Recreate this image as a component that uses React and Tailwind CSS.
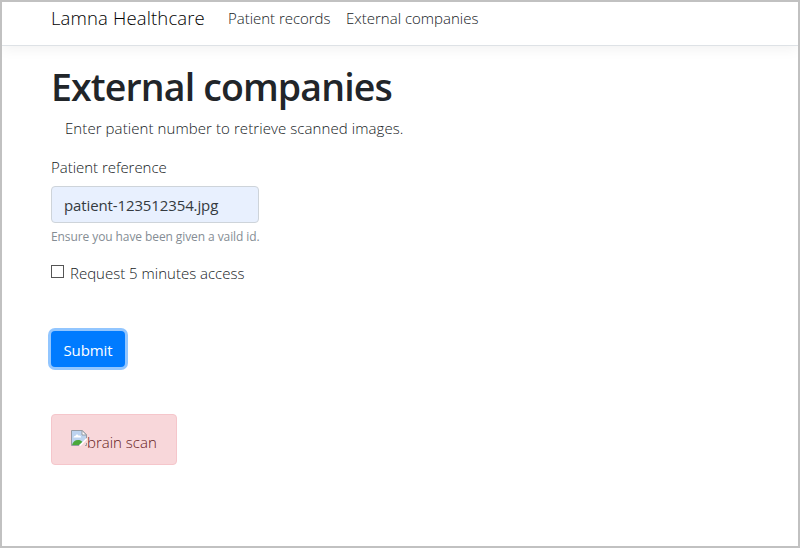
function BrokenImage() {
  return (
    <svg width="16" height="16" viewBox="0 0 16 16" className="shrink-0">
      <path d="M.5.5h10.800L15.500 4.700V8L8 15.500H.5z" fill="#bdd3ef" />
      <path d="M2.500 7.500h7.500c.3-2-1.600-2.600-2.400-1.700C6.900 3.900 4.600 4.400 4.500 6c-1-.1-1.900.4-2 1.500z" fill="#fff" />
      <path d="M1 15c1-3.300 3-5 6-5 1.900 0 3.200.6 4.300 2l-3.300 3z" fill="#4aa83a" />
      <path d="M.5 15.500V.5h10.800l4.200 4.200V8M.5 15.500H8M14 15.500h1.500V13" fill="none" stroke="#979ba3" />
      <path d="M11 .5v4.500h4.500z" fill="#fff" stroke="#979ba3" />
      <path d="M15.500 9L9 15.500" stroke="#fff" strokeWidth="1.500" />
    </svg>
  );
}

export default function App() {
  return (
    <div className="flex h-[548px] w-[800px] flex-col overflow-hidden border-2 border-[#c1c1c1] bg-white font-['Open_Sans','Noto_Sans',sans-serif] text-[15px] leading-6 text-[#15191d]">
      <header className="flex h-11 shrink-0 items-start border-b border-[#dee2e6] pl-[49px] shadow-[0_4px_12px_rgba(0,0,0,0.05)]">
        <nav className="flex whitespace-nowrap pt-[4px] font-light">
          <a className="w-[177px] text-[18.500px] tracking-[0.14px] text-black">Lamna Healthcare</a>
          <a className="w-[118px] tracking-[-0.03px]">Patient records</a>
          <a>External companies</a>
        </nav>
      </header>
      <main className="flex flex-col items-start whitespace-nowrap pl-[49px] font-light">
        <h1 className="mt-[17px] text-[37.500px] font-semibold leading-[48px] tracking-[-0.87px] text-[#212529]">External companies</h1>
        <p className="mt-[5px] pl-[14px] tracking-[0.08px]">Enter patient number to retrieve scanned images.</p>
        <label className="mt-[15px] tracking-[-0.03px]">Patient reference</label>
        <div className="mt-[7px] flex h-[37px] w-[208px] items-center rounded border border-[#ced4da] bg-[#e8f0fe] pl-3 font-normal tracking-[-0.12px] text-[#343a40]">
          patient-123512354.jpg
        </div>
        <small className="mt-[3px] text-[12px] font-normal leading-[22px] tracking-[-0.09px] text-[#858d94]">Ensure you have been given a vaild id.</small>
        <label className="mt-[13px] flex items-center gap-[6px]">
          <span className="mb-[3px] size-[13px] border border-[#555] bg-white" />
          Request 5 minutes access
        </label>
        <button className="mt-[46px] h-[36px] w-[74px] rounded bg-[#007bff] pt-[2px] font-normal tracking-[-0.1px] text-white shadow-[0_0_0_3px_#92c6ff]">Submit</button>
        <div className="mt-[47px] flex h-[51px] w-[126px] rounded border border-[#f5c6cb] bg-[#f8d7da] pl-[19px] pt-[15px] text-[#651a21]">
          <BrokenImage />
          <span>brain scan</span>
        </div>
      </main>
    </div>
  );
}
